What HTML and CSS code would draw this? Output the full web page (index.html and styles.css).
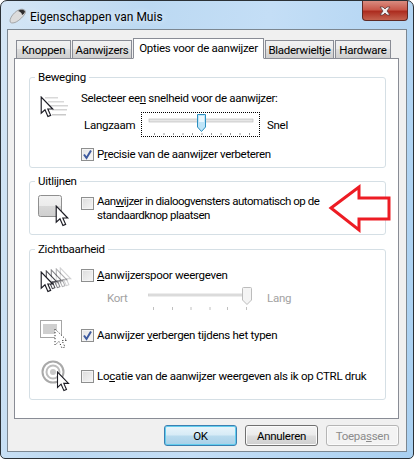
FILE: index.html
```html
<!DOCTYPE html>
<html lang="nl">

<head>
  <meta charset="UTF-8">
  <meta name="viewport" content="width=device-width, initial-scale=1.0">
  <title>Eigenschappen van Muis</title>
  <link rel="stylesheet" href="styles.css">
</head>

<body>
  <svg class="defs" width="0" height="0">
    <symbol id="arrow" viewBox="0 0 14 21">
      <path d="M1 1V16.5L4.6 13.2L7.4 19.6L10 18.5L7.3 12.4H12Z" fill="#fff" stroke="#1c1c24" stroke-width="1.1" stroke-linejoin="miter" />
    </symbol>
  </svg>

  <div class="window">
    <div class="titlebar">
      <svg class="app-icon" width="18" height="16" viewBox="0 0 18 16">
        <path d="M1 13C1 9 6 3 11 1.5C14 .6 17 2 16.5 4.5C16 7 10 13 6 14.5C3 15.500 1 15 1 13Z" fill="#dcdcdc" stroke="#8b8b8b" stroke-width=".7" />
        <path d="M9 3C11 1.500 15 1 16 3.500C16 5 14 6.500 13 7C13 5 11 3.500 9 3Z" fill="#2d2d2f" />
      </svg>
      <span class="title">Eigenschappen van Muis</span>
      <div class="close">
        <svg width="16" height="10" viewBox="0 0 16 10">
          <path d="M3 1H6L8 3L10 1H13L10 5L13 9H10L8 7L6 9H3L6 5Z" fill="#f2f2f2" stroke="#5d3a3a" stroke-width=".8" />
        </svg>
      </div>
    </div>

    <div class="client">
      <div class="tabs">
        <div class="tab t-knoppen">Knoppen</div>
        <div class="tab t-aanwijzers">Aanwijzers</div>
        <div class="tab active t-opties">Opties voor de aanwijzer</div>
        <div class="tab t-blader">Bladerwieltje</div>
        <div class="tab t-hardware">Hardware</div>
      </div>

      <div class="panel">
        <fieldset class="group g-beweging">
          <legend>Beweging</legend>
          <div class="group-body">
            <div class="row row-text">
              <svg class="icon" width="34" height="26" viewBox="0 0 34 26">
                <g fill="#c9c9c9">
                  <rect x="5" y="1" width="13" height="1.500" opacity=".7" />
                  <rect x="8" y="5" width="16" height="1.500" opacity=".7" />
                  <rect x="10" y="9" width="18" height="1.500" opacity=".8" />
                  <rect x="12" y="13" width="15" height="1.500" opacity=".8" />
                  <rect x="12" y="18" width="14" height="1.500" />
                </g>
                <use href="#arrow" x="0" y="0" width="15" height="22" />
              </svg>
              <span class="tight">Selecteer ee<u>n</u> snelheid voor de aanwijzer:</span>
            </div>
            <div class="row slider-row">
              <span class="slow">Langzaam</span>
              <div class="slider-focus">
                <svg width="117" height="23" viewBox="0 0 117 23">
                  <rect x="7" y="6" width="104" height="3" fill="#e6e6e6" stroke="#b5b5b5" stroke-width=".6" />
                  <path d="M12.500 20v2M22 20v2M31.500 20v2M41 20v2M50.500 20v2M60 20v2M69.500 20v2M79 20v2M88.500 20v2M98 20v2M107.500 20v2" stroke="#9a9a9a" />
                  <path d="M55.500 1.500H63.500V14L59.500 18.500L55.500 14Z" fill="#bfe5f8" stroke="#2c8fc0" />
                  <rect x="57" y="3" width="5" height="6" fill="#e9f7fe" />
                </svg>
              </div>
              <span>Snel</span>
            </div>
            <label class="row check-row c-precisie">
              <span class="check on"><svg width="11" height="11" viewBox="0 0 11 11"><path d="M2 5.500L4.500 9L9 1.500" fill="none" stroke="#3d5a9f" stroke-width="2" /></svg></span>
              <span class="tight">P<u>r</u>ecisie van de aanwijzer verbeteren</span>
            </label>
          </div>
        </fieldset>

        <fieldset class="group g-uitlijnen">
          <legend>Uitlijnen</legend>
          <div class="align-row">
            <svg class="btn-icon" width="34" height="33" viewBox="0 0 34 33">
              <defs>
                <linearGradient id="btnfill" x1="0" y1="0" x2="0" y2="1">
                  <stop offset="0" stop-color="#f2f2f2" />
                  <stop offset=".5" stop-color="#ebebeb" />
                  <stop offset=".5" stop-color="#d8d8d8" />
                  <stop offset="1" stop-color="#cfcfcf" />
                </linearGradient>
              </defs>
              <rect x=".500" y=".500" width="23" height="21" rx="2" fill="url(#btnfill)" stroke="#8f8f8f" />
              <use href="#arrow" x="17" y="10" width="15" height="22" />
            </svg>
            <span class="check"></span>
            <span class="wrap">Aan<u>w</u>ijzer in dialoogvensters automatisch op de standaardknop plaatsen</span>
          </div>
        </fieldset>

        <fieldset class="group g-zicht">
          <legend>Zichtbaarheid</legend>
          <div class="group-body zicht-body">
            <div class="row check-row c-spoor">
              <svg class="icon" width="34" height="26" viewBox="0 0 34 26">
                <use href="#arrow" x="19" y="0" width="14" height="20" opacity=".2" />
                <use href="#arrow" x="15" y="1" width="14" height="20" opacity=".35" />
                <use href="#arrow" x="10" y="2" width="14" height="20" opacity=".55" />
                <use href="#arrow" x="5" y="3" width="14" height="20" opacity=".8" />
                <use href="#arrow" x="0" y="4" width="15" height="22" />
              </svg>
              <span class="check"></span>
              <span><u>A</u>anwijzerspoor weergeven</span>
            </div>
            <div class="row trail-row">
              <span class="short">Kort</span>
              <svg width="112" height="26" viewBox="0 0 112 26">
                <rect x="0" y="8" width="97" height="2" fill="#e6e6e6" stroke="#c4c4c4" stroke-width=".6" />
                <path d="M5.500 21v3M24.500 21v3M43 21v3M62 21v3M79.500 21v3M98.500 21v3" stroke="#c0c0c0" />
                <path d="M94.500 2.500Q94.500 1.500 95.500 1.500H102.500Q103.500 1.500 103.500 2.500V14L99 18.500L94.500 14Z" fill="#f4f4f4" stroke="#bcbcbc" />
              </svg>
              <span class="long">Lang</span>
            </div>
            <div class="row check-row c-verbergen">
              <svg class="icon" width="34" height="30" viewBox="0 0 34 30">
                <rect x=".500" y=".500" width="21" height="17" fill="#fff" stroke="#a5a5a5" />
                <rect x="3" y="4" width="14" height="10" fill="#cfcfcf" />
                <path d="M15 9V25L19 21.500L22 28L25 27L22 20.500H27Z" fill="#fff" stroke="#333" stroke-dasharray="1.200 1.800" />
              </svg>
              <span class="check on"><svg width="11" height="11" viewBox="0 0 11 11"><path d="M2 5.500L4.500 9L9 1.500" fill="none" stroke="#3d5a9f" stroke-width="2" /></svg></span>
              <span>Aanwijzer <u>v</u>erbergen tijdens het typen</span>
            </div>
            <div class="row check-row c-locatie">
              <svg class="icon" width="34" height="32" viewBox="0 0 34 32">
                <circle cx="13" cy="12" r="10.500" fill="#fff" stroke="#a9a9a9" stroke-width="2" />
                <circle cx="13" cy="12" r="6.500" fill="#fff" stroke="#bdbdbd" stroke-width="2" />
                <circle cx="13" cy="12" r="3" fill="#c9c9c9" />
                <use href="#arrow" x="16" y="11" width="15" height="21" />
              </svg>
              <span class="check"></span>
              <span>Lo<u>c</u>atie van de aanwijzer weergeven als ik op CTRL druk</span>
            </div>
          </div>
        </fieldset>
      </div>

      <div class="buttons">
        <button class="default">OK</button>
        <button>Annuleren</button>
        <button disabled>Toepa<u>s</u>sen</button>
      </div>
    </div>

    <svg class="callout" width="66" height="50" viewBox="0 0 66 50">
      <path d="M3 24L31 3V14H61V35H31V46Z" fill="#fff" stroke="#ed1c24" stroke-width="3" />
    </svg>
  </div>
</body>

</html>
```

FILE: styles.css
```css
* {
  box-sizing: border-box;
}

body {
  margin: 0;
  background: #fff;
  font-family: Roboto, sans-serif;
  font-size: 11.5px;
  letter-spacing: -0.28px;
  line-height: 16px;
  color: #000;
}

.defs {
  display: block;
  height: 0;
}

.window {
  position: relative;
  width: 414px;
  height: 459px;
  padding: 0 6px 6px 7px;
  border-radius: 7px 7px 5px 5px;
  border: 1px solid #2b3136;
  background: linear-gradient(100deg, #d5e6f5 0%, #bcd9f2 30%, #c4def6 55%, #a9d0f1 100%);
  display: flex;
  flex-direction: column;
}

.titlebar {
  height: 28px;
  display: flex;
  align-items: center;
  flex-shrink: 0;
}

.app-icon {
  margin: 2px 0 0 1px;
}

.title {
  margin: 3px 0 0 3px;
  font-size: 12px;
  letter-spacing: 0;
  text-shadow: 0 0 6px #fff;
}

.close {
  width: 46px;
  height: 20px;
  margin: -8px -1px 0 auto;
  border: 1px solid #5e2a25;
  border-top: none;
  border-radius: 0 0 4px 4px;
  background: linear-gradient(#d98c80 0%, #c9594b 45%, #ad2d20 55%, #c4624f 100%);
  display: flex;
  align-items: center;
  justify-content: center;
}

.client {
  flex: 1;
  margin-left: -1px;
  border: 1px solid #7c8791;
  background: #f0f0f0;
  padding: 7px 7px 0 6px;
}

.tabs {
  display: flex;
  height: 21px;
  padding-left: 2px;
  align-items: flex-end;
}

.tab {
  height: 18px;
  padding-top: 1px;
  border: 1px solid #898c95;
  border-bottom: none;
  margin-right: 1px;
  background: linear-gradient(#f2f2f2, #ebebeb 45%, #dddddd 50%, #cfcfcf);
  text-align: center;
  white-space: nowrap;
}

.tab.active {
  height: 21px;
  margin-bottom: -1px;
  background: #fff;
  position: relative;
  z-index: 1;
  border-bottom: 1px solid #fff;
}

.t-knoppen { width: 55px; }
.t-aanwijzers { width: 60px; }
.t-opties { width: 131px; margin-right: 0; }
.t-blader { width: 69px; margin-left: 1px; }
.t-hardware { width: 56px; margin-right: 0; }

.panel {
  height: 361px;
  border: 1px solid #898c95;
  background: #fff;
  padding: 10px 12px 0 14px;
}

.group {
  margin: 0;
  padding: 0;
  min-width: 0;
  border: 1px solid #d5dfe5;
  border-radius: 3px;
}

.group legend {
  margin-left: 5px;
  padding: 0 3px;
}

.group-body {
  padding: 5px 0 0 51px;
}

.zicht-body {
  padding: 10px 0 0 10px;
}

.g-beweging {
  height: 99px;
}

.g-uitlijnen {
  height: 62px;
  margin-top: 5px;
  padding-top: 5px;
}

.g-zicht {
  height: 159px;
  margin-top: 6px;
}

.row {
  display: flex;
  align-items: center;
  height: 16px;
  white-space: nowrap;
}

.tight {
  letter-spacing: -0.33px;
}

.icon {
  flex-shrink: 0;
  margin-right: 7px;
}

.row-text {
  margin-left: -41px;
}

.row-text .icon {
  margin-top: 22px;
}

.slider-row {
  margin: 6px 0 0 3px;
  height: 25px;
}

.slow {
  width: 57px;
}

.slider-focus {
  width: 119px;
  height: 25px;
  border: 1px dotted #000;
  margin-right: 7px;
  line-height: 0;
}

.c-precisie {
  margin-top: 9px;
}

.check {
  flex-shrink: 0;
  width: 13px;
  height: 13px;
  margin-right: 3px;
  border: 1px solid #8e8f8f;
  background: linear-gradient(135deg, #dcdcdc, #f6f6f6);
  box-shadow: inset 0 0 0 1px #f4f4f4;
  display: flex;
  align-items: center;
  justify-content: center;
}

.check.on {
  background: linear-gradient(135deg, #e4e4e4, #f8f8f8);
}

.align-row {
  display: flex;
}

.btn-icon {
  margin: 1px 9px 0 8px;
  flex-shrink: 0;
}

.align-row .check {
  margin-top: 3px;
}

.wrap {
  width: 232px;
  line-height: 14px;
  letter-spacing: -0.48px;
}

.c-spoor .icon {
  margin-top: 10px;
}

.trail-row {
  height: 26px;
  margin-left: 67px;
  color: #a2a2a2;
  align-items: flex-start;
}

.short {
  width: 41px;
  margin-top: 7px;
}

.long {
  margin: 7px 0 0 7px;
}

.trail-row svg {
  margin-top: 3px;
  flex-shrink: 0;
}

.c-verbergen {
  margin-top: 18px;
}

.c-locatie {
  margin-top: 25px;
}

.buttons {
  display: flex;
  justify-content: flex-end;
  gap: 8px;
  margin-top: 6px;
}

button {
  width: 73px;
  height: 21px;
  padding: 0;
  font: inherit;
  letter-spacing: inherit;
  color: #000;
  border: 1px solid #707070;
  border-radius: 3px;
  background: linear-gradient(#f4f4f4, #ebebeb 48%, #dddddd 52%, #cfcfcf);
  box-shadow: inset 0 0 0 1px #fbfbfb;
}

button.default {
  border-color: #3c7fb1;
  background: linear-gradient(#e9f5fb, #d6ebf6 48%, #b9dbee 52%, #a8d0e8);
  box-shadow: inset 0 0 0 1px #62cdee;
}

button:disabled {
  color: #8b8b8b;
  border-color: #b5b5b5;
  background: #f3f3f3;
}

.callout {
  position: absolute;
  left: 327px;
  top: 183px;
}
```
